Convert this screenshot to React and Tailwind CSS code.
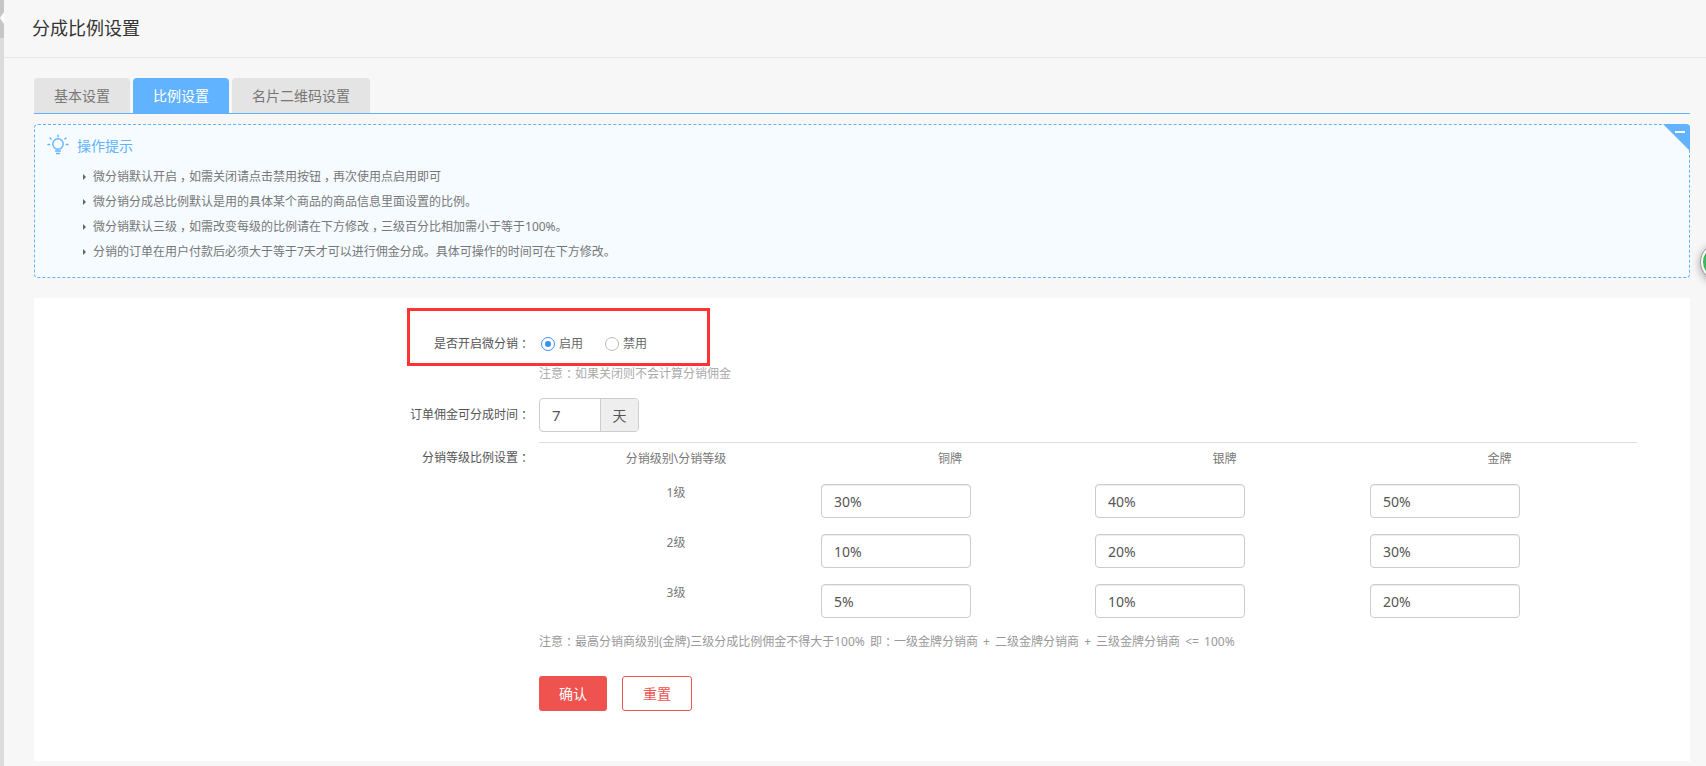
import React from "react";

const tips = [
  "微分销默认开启，如需关闭请点击禁用按钮，再次使用点启用即可",
  "微分销分成总比例默认是用的具体某个商品的商品信息里面设置的比例。",
  "微分销默认三级，如需改变每级的比例请在下方修改，三级百分比相加需小于等于100%。",
  "分销的订单在用户付款后必须大于等于7天才可以进行佣金分成。具体可操作的时间可在下方修改。",
];

const levels = [
  { name: "1级", values: ["30%", "40%", "50%"] },
  { name: "2级", values: ["10%", "20%", "30%"] },
  { name: "3级", values: ["5%", "10%", "20%"] },
];

// the reference font centres ， and ： in their cell
function Text({ children }) {
  return children.split(/([，：])/).map((part, i) =>
    part === "，" || part === "：" ? (
      <span key={i} className="inline-block w-[12px] text-center [font-feature-settings:'halt']">{part}</span>
    ) : (
      part
    )
  );
}

function BulbIcon() {
  return (
    <svg width="22" height="22" viewBox="0 0 22 22" fill="none" stroke="#62b3ff" strokeWidth="1.4" strokeLinecap="round">
      <circle cx="11" cy="10" r="5.2" />
      <path d="M8.5 17h5M9.5 19.5h3" />
      <path d="M11 1.2v1.6M3 4l1.1 1.1M19 4l-1.1 1.1M1 10.5h1.6M19.4 10.5H21" />
    </svg>
  );
}

function Radio({ checked, label }) {
  return (
    <label className="flex items-center">
      <span className={"flex h-[14px] w-[14px] items-center justify-center rounded-full border " + (checked ? "border-[#3d8fe6]" : "border-[#bbbbbb]")}>
        {checked && <span className="h-[6px] w-[6px] rounded-full bg-[#3d8fe6]" />}
      </span>
      <span className="ml-[4px] text-[#666666]">{label}</span>
    </label>
  );
}

export default function App() {
  return (
    <div className="flex h-[766px] overflow-hidden bg-[#f7f7f7] font-['Noto_Sans','Noto_Sans_CJK_SC',sans-serif] text-[12px] text-[#666666]">
      {/* left sidebar edge */}
      <div className="relative w-[4px] shrink-0 bg-[#dcdcdc]">
        <div className="h-[38px] bg-[#c6c6c6]" />
        <div className="absolute left-0 top-[12px] h-0 w-0 border-y-[6px] border-r-[4px] border-y-transparent border-r-white" />
      </div>

      <div className="relative min-w-0 flex-1">
        <div className="flex h-[58px] items-center border-b border-[#e7e7e7] pb-[1px] pl-[28px] text-[18px] text-[#333333]">
          分成比例设置
        </div>

        <div className="pl-[30px] pr-[16px] pt-[20px]">
          {/* tabs */}
          <div className="flex gap-[3px] border-b border-[#62b3ff] text-[14px]">
            <div className="flex h-[35px] w-[96px] items-center justify-center rounded-t-[4px] bg-[#e4e4e4] text-[#777777]">基本设置</div>
            <div className="flex h-[35px] w-[96px] items-center justify-center rounded-t-[4px] bg-[#62b3ff] text-white">比例设置</div>
            <div className="flex h-[35px] w-[138px] items-center justify-center rounded-t-[4px] bg-[#e4e4e4] text-[#777777]">名片二维码设置</div>
          </div>

          {/* tips */}
          <div className="relative mt-[10px] h-[154px] rounded-[4px] border border-dashed border-[#62b3ff] bg-[#f5fbff] pl-[12px] pt-[9px]">
            <div className="absolute right-[-1px] top-[-1px] h-[27px] w-[27px] rounded-tr-[4px] bg-[#62b3ff] [clip-path:polygon(0_0,100%_0,100%_100%)]">
              <div className="absolute right-[5px] top-[7px] h-[2px] w-[10px] bg-white" />
            </div>
            <div className="flex items-center">
              <BulbIcon />
              <span className="ml-[8px] text-[14px] text-[#62b3ff]">操作提示</span>
            </div>
            <ul className="mt-[8px] pl-[36px]">
              {tips.map((t) => (
                <li key={t} className="flex h-[25px] items-center text-[#777777]">
                  <span className="mr-[7px] h-0 w-0 border-y-[3px] border-l-[3px] border-y-transparent border-l-[#666666]" />
                  <span><Text>{t}</Text></span>
                </li>
              ))}
            </ul>
          </div>

          {/* form */}
          <div className="relative mt-[20px] h-[463px] bg-white pt-[36px]">
            <div className="absolute left-[373px] top-[10px] h-[58px] w-[303px] border-[3px] border-[#ff3333]" />

            <div className="flex h-[20px] items-center">
              <div className="w-[496px] text-right text-[#555555]"><Text>是否开启微分销：</Text></div>
              <div className="ml-[11px] flex gap-[22px]">
                <Radio checked label="启用" />
                <Radio label="禁用" />
              </div>
            </div>
            <div className="ml-[505px] mt-[12px] leading-[16px] text-[#aaaaaa]"><Text>注意：如果关闭则不会计算分销佣金</Text></div>

            <div className="mt-[16px] flex items-center">
              <div className="w-[496px] text-right text-[#555555]"><Text>订单佣金可分成时间：</Text></div>
              <div className="ml-[9px] flex h-[34px] w-[100px] rounded-[4px] border border-[#cccccc] text-[14px]">
                <input defaultValue="7" className="w-[60px] min-w-0 pl-[12px] text-[15px] text-[#555555] outline-none" />
                <div className="flex flex-1 items-center justify-center rounded-r-[3px] border-l border-[#cccccc] bg-[#eeeeee] text-[#555555]">天</div>
              </div>
            </div>

            <div className="mt-[10px] flex">
              <div className="w-[496px] pt-[8px] text-right leading-[16px] text-[#555555]"><Text>分销等级比例设置：</Text></div>
              <div className="ml-[9px] w-[1098px] border-t border-[#dddddd]">
                <div className="grid grid-cols-[274px_274px_275px_275px] pt-[8px] text-center leading-[16px] text-[#777777]">
                  <div>分销级别\分销等级</div>
                  <div>铜牌</div>
                  <div>银牌</div>
                  <div>金牌</div>
                </div>
                <div className="mt-[17px] flex flex-col gap-[16px]">
                  {levels.map((row) => (
                    <div key={row.name} className="grid grid-cols-[274px_274px_275px_275px]">
                      <div className="pt-[1px] text-center leading-[16px] text-[#777777]">{row.name}</div>
                      {row.values.map((v, i) => (
                        <div key={i} className="pl-[8px]">
                          <input
                            defaultValue={v}
                            className="block h-[34px] w-[150px] rounded-[4px] border border-[#cccccc] pl-[12px] text-[14px] text-[#555555] shadow-[inset_0_1px_1px_rgba(0,0,0,0.075)] outline-none"
                          />
                        </div>
                      ))}
                    </div>
                  ))}
                </div>
                <div className="mt-[16px] leading-[16px] text-[#999999] [word-spacing:2px]">
                  <Text>注意：最高分销商级别(金牌)三级分成比例佣金不得大于100% 即：一级金牌分销商 + 二级金牌分销商 + 三级金牌分销商 &lt;= 100%</Text>
                </div>
                <div className="mt-[26px] flex gap-[15px] text-[14px]">
                  <button className="h-[35px] w-[68px] rounded-[3px] bg-[#ef5350] text-white">确认</button>
                  <button className="h-[35px] w-[70px] rounded-[3px] border border-[#ef5350] bg-white text-[#ef5350]">重置</button>
                </div>
              </div>
            </div>
          </div>
        </div>

        {/* floating widget cut by the window edge */}
        <div className="absolute right-[-32px] top-[243px] flex h-[38px] w-[38px] items-center justify-center rounded-full border border-[#999999] bg-white shadow-[0_2px_8px_rgba(0,0,0,0.35)]">
          <div className="h-[32px] w-[32px] rounded-full bg-[#3cb95a]" />
        </div>
      </div>
    </div>
  );
}
